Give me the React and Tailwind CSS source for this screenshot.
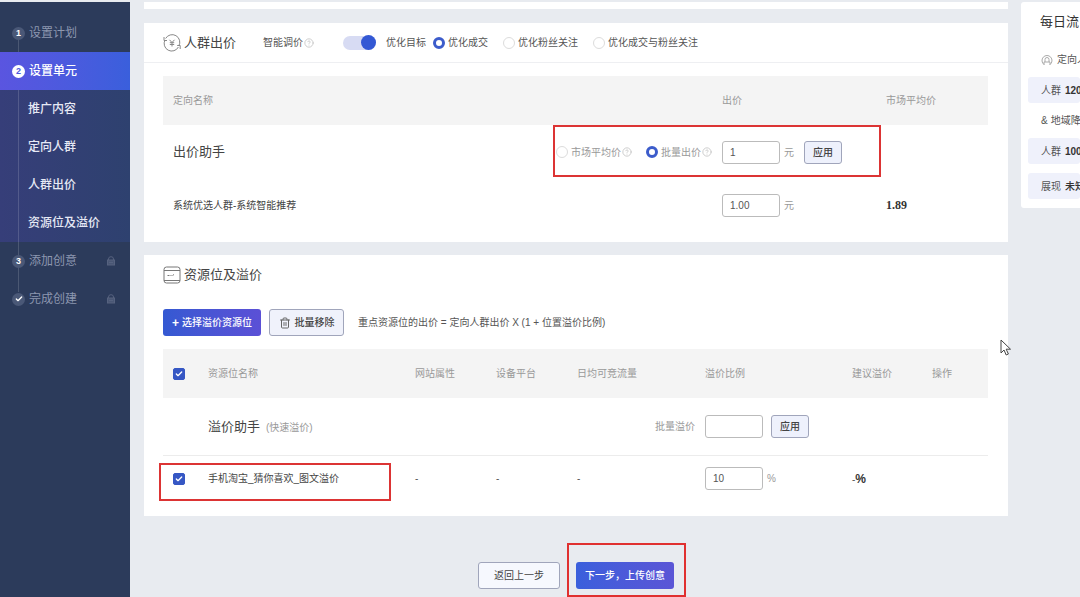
import React, { useState } from 'react';
import { FiCheck, FiTrash2, FiHelpCircle } from 'react-icons/fi';

const subItems = ['推广内容', '定向人群', '人群出价', '资源位及溢价'];

const goals = ['优化成交', '优化粉丝关注', '优化成交与粉丝关注'];

const LockIcon = () => (
  <svg viewBox="0 0 10 10" className="mr-[14px] ml-auto size-[10px]" fill="none" stroke="#56627f">
    <path d="M2.500 4V3a2.500 2.300 0 0 1 5 0v1" />
    <rect x="1.500" y="4" width="7" height="5" fill="#4a5775" />
    <path d="M3 6.500h4" />
  </svg>
);

const Step = ({ badge, label, active, locked }) => (
  <a
    href="#"
    className={`relative flex h-[38px] items-center gap-1 pl-3 text-xs ${
      active
        ? 'bg-gradient-to-r from-[#5a55e0] to-[#3a5fdc] font-medium text-white'
        : 'text-[#8d97b0]'
    }`}
  >
    <span
      className={`flex size-[13px] items-center justify-center rounded-full text-[9px] font-bold ${
        active ? 'bg-white text-[#4c57dc]' : 'bg-[#4a5877] text-white'
      }`}
    >
      {badge}
    </span>
    <span>{label}</span>
    {locked && <LockIcon />}
  </a>
);

const Sidebar = () => (
  <nav className="relative w-[130px] shrink-0 bg-[#2c3b5b] pt-3">
    <div className="absolute top-[38px] left-[18px] z-10 h-[252px] w-px bg-white/15"></div>
    <div className="relative z-20">
      <Step badge="1" label="设置计划" />
    </div>
    <div className="relative z-20">
      <Step badge="2" label="设置单元" active />
    </div>
    <div className="bg-gradient-to-r from-[#363e79] to-[#2e416f]">
      {subItems.map((item) => (
        <a key={item} href="#" className="flex h-[38px] items-center pl-7 text-xs font-medium text-[#e6e9f5]">
          {item}
        </a>
      ))}
    </div>
    <div className="relative z-20">
      <Step badge="3" label="添加创意" locked />
      <Step badge={<FiCheck className="size-[8px]" strokeWidth={4} />} label="完成创建" locked />
    </div>
  </nav>
);

const Help = () => <FiHelpCircle className="size-[10px] shrink-0 text-[#c4c4c4]" />;

const Radio = ({ name, label, checked, onChange, help, muted }) => (
  <label className={`flex items-center gap-[3px] whitespace-nowrap ${muted ? 'text-[#999]' : 'text-[#555]'}`}>
    <input
      type="radio"
      name={name}
      checked={checked}
      onChange={onChange}
      className="size-3 appearance-none rounded-full border border-[#dcdcdc] bg-white checked:border-[3px] checked:border-[#3c5ccb]"
    />
    <span className="flex items-center gap-px">
      {label}
      {help && <Help />}
    </span>
  </label>
);

const Tick = ({ label, defaultChecked }) => (
  <span className="relative flex size-3">
    <input
      type="checkbox"
      aria-label={label}
      defaultChecked={defaultChecked}
      className="peer size-3 appearance-none rounded-xs border border-[#c4c8d4] checked:border-[#3657c4] checked:bg-[#3657c4]"
    />
    <FiCheck
      strokeWidth={4}
      className="pointer-events-none absolute inset-0 m-auto hidden size-[8px] text-white peer-checked:block"
    />
  </span>
);

const Field = ({ label, value }) => (
  <input
    type="text"
    aria-label={label}
    defaultValue={value}
    className="h-[23px] w-[58px] rounded-[3px] border border-[#bbb] bg-white px-[7px] font-[Liberation_Sans,Noto_Sans_CJK_SC,sans-serif] text-[10px] text-[#555]"
  />
);

const ApplyButton = () => (
  <button className="h-[23px] w-[38px] rounded-[3px] border border-[#a0a5bb] bg-[#eef1fc] text-[10px] font-medium text-[#444]">
    应用
  </button>
);

const BidIcon = () => (
  <svg viewBox="0 0 18 18" className="size-[18px]" fill="none" stroke="#888" strokeWidth="1">
    <path d="M2.600 4.500A7.500 7.500 0 0 1 15.800 12M15.400 13A7.500 7.500 0 0 1 2 6" />
    <path d="M1 3v3.500h3M17.200 15v-3.500h-3" />
    <path d="M6.500 5.800 9 8.500l2.500-2.700M9 8.500v4M6.800 8.700h4.400M6.800 10.500h4.400" />
  </svg>
);

const SlotIcon = () => (
  <svg viewBox="0 0 18 18" className="size-[18px]" fill="none" stroke="#777" strokeWidth="1">
    <rect x="1" y="1" width="16" height="16" rx="2.500" />
    <path d="M1 4.500h16M1 14.500h16M4.500 9.500h2M7.500 9.500h1M9.500 9.500l1.500-1" />
  </svg>
);

const BidCard = () => {
  const [goal, setGoal] = useState(0);
  const [mode, setMode] = useState('batch');

  return (
    <section className="relative bg-white pb-[11px]">
      <header className="flex h-10 items-center border-b border-[#eeeff2] pl-[19px] text-[10px]">
        <h2 className="flex items-center gap-[3px] text-[13px] text-[#444]">
          <BidIcon />
          人群出价
        </h2>
        <div className="ml-[27px] flex items-center gap-px text-[#555]">
          智能调价
          <Help />
        </div>
        <label className="mr-[10px] ml-[29px] flex">
          <input type="checkbox" role="switch" aria-label="智能调价" defaultChecked className="peer sr-only" />
          <span className="flex h-[14px] w-[33px] items-center rounded-full bg-[#d7dbf3] peer-checked:justify-end">
            <span className="size-[15px] rounded-full bg-[#3358d4]"></span>
          </span>
        </label>
        <span className="mr-[7px] text-[#555]">优化目标</span>
        <div className="flex gap-[15px]">
          {goals.map((item, i) => (
            <Radio key={item} name="goal" label={item} checked={goal === i} onChange={() => setGoal(i)} />
          ))}
        </div>
      </header>

      <div className="pt-[13px] pr-5 pl-[19px]">
        <table className="w-full table-fixed text-left text-[10px]">
          <thead>
            <tr className="h-[49px] bg-[#f4f4f4] text-[#999]">
              <th className="pl-[10px] font-normal">定向名称</th>
              <th className="w-[164px] pl-[10px] font-normal">出价</th>
              <th className="w-[112px] pl-[10px] font-normal">市场平均价</th>
            </tr>
          </thead>
          <tbody>
            <tr className="h-[54px]">
              <td className="pl-[10px]">
                <div className="flex items-center justify-between">
                  <span className="text-[13px] text-[#444]">出价助手</span>
                  <div className="flex gap-[14px]">
                    <Radio
                      name="mode"
                      label="市场平均价"
                      muted
                      help
                      checked={mode === 'market'}
                      onChange={() => setMode('market')}
                    />
                    <Radio
                      name="mode"
                      label="批量出价"
                      muted
                      help
                      checked={mode === 'batch'}
                      onChange={() => setMode('batch')}
                    />
                  </div>
                </div>
              </td>
              <td className="pl-[10px]">
                <div className="flex items-center text-[#999]">
                  <Field label="批量出价" value="1" />
                  <span className="mr-[10px] ml-1">元</span>
                  <ApplyButton />
                </div>
              </td>
              <td></td>
            </tr>
            <tr className="h-[52px]">
              <td className="pl-[10px] text-[#444]">系统优选人群-系统智能推荐</td>
              <td className="pl-[10px]">
                <div className="flex items-center text-[#999]">
                  <Field label="出价" value="1.00" />
                  <span className="ml-1">元</span>
                </div>
              </td>
              <td className="pl-[10px] font-[Liberation_Serif,serif] text-xs font-bold text-[#333]">1.89</td>
            </tr>
          </tbody>
        </table>
      </div>

      <div className="pointer-events-none absolute top-[102px] right-[127px] h-[52px] w-[328px] border-2 border-[#dc3434]"></div>
    </section>
  );
};

const SlotCard = () => (
  <section className="relative bg-white pr-5 pb-[14px] pl-[19px]">
    <h2 className="flex h-10 items-center gap-[3px] text-[13px] text-[#444]">
      <SlotIcon />
      资源位及溢价
    </h2>
    <div className="flex items-center gap-2 pt-[14px] pb-[13px] text-[10px]">
      <button className="flex h-[27px] w-[98px] items-center justify-center gap-[3px] rounded-[3px] bg-gradient-to-r from-[#3459d2] to-[#5b50d6] font-medium text-white">
        <b className="text-xs">+</b>
        选择溢价资源位
      </button>
      <button className="flex h-[27px] w-[75px] items-center justify-center gap-1 rounded-[3px] border border-[#a0a5bb] bg-[#f0f2fb] font-medium text-[#444]">
        <FiTrash2 className="size-3 text-[#666]" />
        批量移除
      </button>
      <p className="ml-[6px] text-[#555]">重点资源位的出价 = 定向人群出价 X (1 + 位置溢价比例)</p>
    </div>

    <table className="w-full table-fixed text-left text-[10px]">
      <thead>
        <tr className="h-[49px] bg-[#f4f4f4] text-[#999]">
          <th className="w-[35px] pl-[10px]">
            <Tick label="全选" defaultChecked />
          </th>
          <th className="pl-[10px] font-normal">资源位名称</th>
          <th className="w-[81px] pl-[10px] font-normal">网站属性</th>
          <th className="w-[81px] pl-[10px] font-normal">设备平台</th>
          <th className="w-[128px] pl-[10px] font-normal">日均可竞流量</th>
          <th className="w-[147px] pl-[10px] font-normal">溢价比例</th>
          <th className="w-[80px] pl-[10px] font-normal">建议溢价</th>
          <th className="w-[66px] pl-[10px] font-normal">操作</th>
        </tr>
      </thead>
      <tbody>
        <tr className="h-[57px] border-b border-[#ececec] text-[#999]">
          <td></td>
          <td className="pl-[10px]">
            <span className="mr-[6px] text-[13px] text-[#444]">溢价助手</span>
            (快速溢价)
          </td>
          <td colSpan={3} className="text-right">批量溢价</td>
          <td className="pl-[10px]">
            <div className="flex items-center gap-2">
              <Field label="批量溢价" />
              <ApplyButton />
            </div>
          </td>
          <td colSpan={2}></td>
        </tr>
        <tr className="h-[47px] text-[#555]">
          <td className="pl-[10px]">
            <Tick label="手机淘宝_猜你喜欢_图文溢价" defaultChecked />
          </td>
          <td className="pl-[10px] text-[#444]">手机淘宝_猜你喜欢_图文溢价</td>
          <td className="pl-[10px]">-</td>
          <td className="pl-[10px]">-</td>
          <td className="pl-[10px]">-</td>
          <td className="pl-[10px]">
            <div className="flex items-center gap-1 text-[#999]">
              <Field label="溢价比例" value="10" />%
            </div>
          </td>
          <td className="pl-[10px]">
            -<b className="text-xs text-[#333]">%</b>
          </td>
          <td></td>
        </tr>
      </tbody>
    </table>

    <div className="pointer-events-none absolute top-[208px] left-[15px] h-[38px] w-[232px] border-2 border-[#dc3434]"></div>
  </section>
);

const Forecast = () => (
  <aside className="w-[59px] shrink-0 self-start overflow-hidden rounded-l-[3px] bg-white pb-[9px] pl-[7px] text-[10px] whitespace-nowrap text-[#555]">
    <h2 className="flex h-10 items-center pl-3 text-[13px] text-[#333]">每日流</h2>
    <div className="flex h-[35px] items-center gap-1 pl-[13px]">
      <svg viewBox="0 0 12 12" className="size-3 shrink-0" fill="none" stroke="#aaa">
        <path d="M3 10.500A5 5 0 1 1 9 10.500" />
        <path d="M3 11V8h6v3M4 8V5.500a2 2 0 0 1 4 0V8" />
      </svg>
      定向人
    </div>
    <p className="flex h-[26px] items-center gap-1 rounded-[3px] bg-[#eff1fb] pl-[13px]">
      人群 <b className="text-[#333]">120</b>
    </p>
    <p className="flex h-[35px] items-center gap-[3px] pl-[13px]">
      <span>&amp;</span>地域降
    </p>
    <p className="flex h-[26px] items-center gap-1 rounded-[3px] bg-[#eff1fb] pl-[13px]">
      人群 <b className="text-[#333]">100</b>
    </p>
    <p className="mt-[9px] flex h-[26px] items-center gap-1 rounded-[3px] bg-[#eff1fb] pl-[13px]">
      展现 <b className="font-medium text-[#333]">未知</b>
    </p>
  </aside>
);

const App = () => {
  return (
    <div className="relative flex min-h-screen bg-[#e8ebf0] pt-[2px] font-[Liberation_Sans,Noto_Sans_CJK_SC,sans-serif]">
      <Sidebar />
      <main className="min-w-0 flex-1 pr-[13px] pl-[14px]">
        <div className="h-[7px] bg-white"></div>
        <div className="mt-[14px]">
          <BidCard />
        </div>
        <div className="mt-[13px]">
          <SlotCard />
        </div>
        <footer className="flex items-center justify-center gap-4 pt-[46px] pb-2 text-[10px]">
          <button className="h-[27px] w-[82px] rounded-[3px] border border-[#a0a5bb] bg-[#f6f8fe] text-[#444]">
            返回上一步
          </button>
          <div className="relative">
            <button className="block h-[27px] w-[98px] rounded-[3px] bg-gradient-to-r from-[#3a5fdc] to-[#5a55d6] font-medium text-white">
              下一步，上传创意
            </button>
            <div className="pointer-events-none absolute -top-[19px] -left-[9px] h-[54px] w-[119px] border-2 border-[#e03030]"></div>
          </div>
        </footer>
      </main>
      <Forecast />

      {/* mouse pointer */}
      <svg viewBox="0 0 12 18" className="pointer-events-none absolute top-[339px] right-[68px] h-[18px] w-3" aria-hidden="true">
        <path d="M1 1v13l3-3 2.200 5 2.200-1-2.200-4.800H10.500z" fill="#fff" stroke="#444" strokeWidth="1" />
      </svg>
    </div>
  );
};

export default App;
